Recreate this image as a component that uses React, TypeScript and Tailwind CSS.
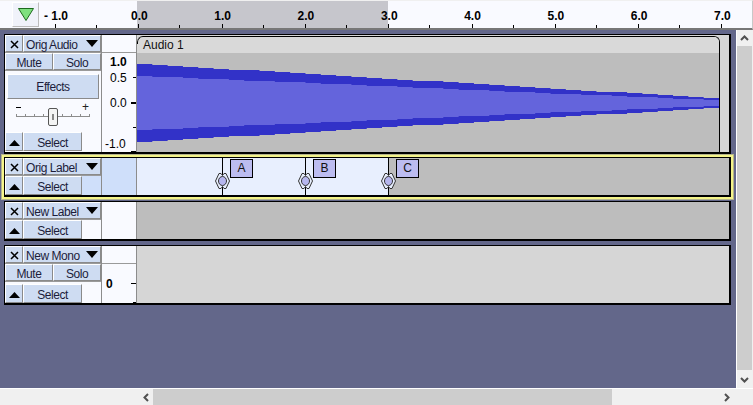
import React from 'react';

const FONT = 'font-["Liberation_Sans",Arial,sans-serif]';
const labels = ['- 1.0', '0.0', '1.0', '2.0', '3.0', '4.0', '5.0', '6.0', '7.0'];

const Btn = ({ className, children }: { className: string; children?: React.ReactNode }) => (
  <div
    className={`flex items-center justify-center bg-[#cedcf2] border-t border-l border-t-white border-l-white border-r border-b border-r-[#8a8a8a] border-b-[#8a8a8a] pt-[2px] text-[12px] tracking-[-0.45px] leading-none text-[#1c1c3a] ${className}`}
  >
    {children}
  </div>
);

const Down = () => (
  <svg width="12" height="7" viewBox="0 0 12 7" className="-mt-[2px]"><path d="M0 0h12L6 7z" fill="#000" /></svg>
);

const Up = () => (
  <svg width="11" height="6" viewBox="0 0 11 6"><path d="M0 6h11L5.5 0z" fill="#000" /></svg>
);

const TitleRow = ({ name }: { name: string }) => (
  <div className="flex h-[18px] border-b border-[#9a9a9a]">
    <Btn className="w-[18px] shrink-0">
      <svg width="9" height="9" viewBox="0 0 9 9" className="-mt-[1px]"><path d="M1 1l7 7M8 1l-7 7" stroke="#000" strokeWidth="1.5" /></svg>
    </Btn>
    <Btn className="flex-1 !justify-between pl-[2px] pr-[2px]">
      <span>{name}</span>
      <Down />
    </Btn>
  </div>
);

const MuteRow = () => (
  <div className="flex h-[18px] border-b border-[#9a9a9a]">
    <Btn className="w-[48px]">Mute</Btn>
    <Btn className="flex-1">Solo</Btn>
  </div>
);

const SelectRow = ({ active }: { active?: boolean }) => (
  <div className={`flex h-[19px] ${active ? 'bg-[#cfdffa]' : ''}`}>
    <Btn className="w-[18px]"><Up /></Btn>
    <Btn className="w-[59px]">Select</Btn>
  </div>
);

const Slider = () => (
  <div className="relative h-[30px] mx-[11px] leading-none text-[#222]">
    <span className="absolute left-0 top-[8px] h-px w-[5px] bg-black" />
    <span className="absolute right-[1px] top-[2px] text-[12px]">+</span>
    <div className="absolute left-0 right-0 top-[15px] h-[3px] border-b border-[#8c8c8c] flex justify-between">
      {[0, 1, 2, 3, 4, 5, 6, 7, 8].map((i) => (
        <span key={i} className="w-px h-[3px] bg-[#8c8c8c]" />
      ))}
    </div>
    <div className="absolute left-[32px] top-[9px] w-[10px] h-[18px] rounded-[2px] border border-[#555] bg-[#f4f4f4] flex items-center justify-center">
      <span className="w-[2px] h-[6px] bg-[#888]" />
    </div>
  </div>
);

// stepped envelope around the centre line, a0 at the left down to a1 at the right
const envelope = (a0: number, a1: number, n: number) => {
  const w = 582 / n;
  const top: string[] = [];
  const bottom: string[] = [];
  for (let i = 0; i < n; i++) {
    const a = Math.round(a0 - ((a0 - a1) * i) / (n - 1));
    top.push(`${i * w},${50 - a}`, `${(i + 1) * w},${50 - a}`);
    bottom.unshift(`${(i + 1) * w},${50 + a}`, `${i * w},${50 + a}`);
  }
  return [...top, ...bottom].join(' ');
};

const AudioTrack = () => (
  <div className="flex h-[120px] border-b-2 border-black border-t border-l border-r-2 bg-[#d6d6d6]">
    <div className="w-[96px] shrink-0 bg-[#f9faff] flex flex-col">
      <TitleRow name="Orig Audio" />
      <MuteRow />
      <div className="px-[2px] pt-[3px]">
        <Btn className="h-[25px] w-full !pt-0">Effects</Btn>
      </div>
      <Slider />
      <div className="mt-auto mb-px"><SelectRow /></div>
    </div>
    <div className="relative w-[36px] shrink-0 bg-[#f9faff] border-x border-[#8c8c8c] text-[12px] leading-none text-black">
      <div className="absolute inset-x-0 top-[17px] h-px bg-[#9a9a9a]" />
      <span className="absolute left-[8px] top-[21px] font-bold">1.0</span>
      <span className="absolute left-[8px] top-[37px]">0.5</span>
      <span className="absolute left-[8px] top-[62px]">0.0</span>
      <span className="absolute left-[3px] top-[103px]">-1.0</span>
      <span className="absolute right-0 top-[42px] w-[3px] h-px bg-black" />
      <span className="absolute right-0 top-[67px] w-[5px] h-[2px] bg-black" />
      <span className="absolute right-0 top-[92px] w-[3px] h-px bg-black" />
      <span className="absolute right-0 top-[116px] w-[5px] h-px bg-black" />
    </div>
    <div className="flex-1 flex pt-[1px]">
      <div className="relative w-[583px] shrink-0 flex flex-col border-r border-black rounded-t-[6px] border-t border-t-black overflow-hidden">
        <span className="absolute left-0 -top-px w-[8px] h-[8px] border-l border-t border-black rounded-tl-[6px]" />
        <div className="h-[16px] bg-[#d9d9d9] pl-[6px] text-[12px] leading-[16px] text-[#111]">Audio 1</div>
        <div className="flex-1 bg-[#bdbdbd]">
          <svg width="582" height="100" viewBox="0 0 582 100" className="block">
            <polygon points={envelope(39, 5, 38)} fill="#3232c8" />
            <polygon points={envelope(27, 3, 38)} fill="#6464dc" />
          </svg>
        </div>
      </div>
    </div>
  </div>
);

const Clip = ({ x, name }: { x: number; name: string }) => (
  <>
    <div className="absolute top-0 bottom-0 w-px bg-black" style={{ left: x }} />
    <div className="absolute top-[15px]" style={{ left: x - 7 }}>
      <svg width="15" height="16" viewBox="0 0 15 16" className="block">
        <path d="M4 .5h2l1.5 2 1.5-2h2l3.5 7.5-3.5 7.5h-2l-1.5-2-1.5 2h-2L.5 8z" fill="#e8effe" stroke="#333" />
        <ellipse cx="7.5" cy="8" rx="4" ry="4.5" fill="#b6b6ee" stroke="#333" />
      </svg>
    </div>
    <div
      className="absolute top-[1px] h-[19px] w-[23px] bg-[#bcbcf0] border border-black text-[12px] leading-[17px] text-center text-[#111]"
      style={{ left: x + 8 }}
    >
      {name}
    </div>
  </>
);

const LabelTrackSelected = () => (
  <div className="-mx-[3px] border border-[#b4b48c]">
    <div className="border-2 border-[#f4f48a]">
      <div className="flex h-[40px] border-t border-b-2 border-black border-l border-r-2 bg-[#bdbdbd]">
        <div className="w-[96px] shrink-0 bg-[#cfdffa] flex flex-col">
          <TitleRow name="Orig Label" />
          <SelectRow active />
        </div>
        <div className="w-[36px] shrink-0 bg-[#cfdffa] border-x border-[#8c8c8c]" />
        <div className="relative flex-1">
          <div className="absolute inset-y-0 left-0 w-[251px] bg-[#e8effe]" />
          <Clip x={85} name="A" />
          <Clip x={168} name="B" />
          <Clip x={251} name="C" />
        </div>
      </div>
    </div>
  </div>
);

const LabelTrack = () => (
  <div className="flex h-[40px] mt-[1px] border-t border-b-2 border-black border-l border-r-2 bg-[#bdbdbd]">
    <div className="w-[96px] shrink-0 bg-[#f9faff] flex flex-col">
      <TitleRow name="New Label" />
      <SelectRow />
    </div>
    <div className="w-[36px] shrink-0 bg-[#f9faff] border-x border-[#8c8c8c]" />
    <div className="flex-1" />
  </div>
);

const MonoTrack = () => (
  <div className="flex h-[60px] mt-[4px] border-t border-b-2 border-black border-l border-r-2 bg-[#d6d6d6]">
    <div className="w-[96px] shrink-0 bg-[#f9faff] flex flex-col">
      <TitleRow name="New Mono" />
      <MuteRow />
      <div className="mt-auto"><SelectRow /></div>
    </div>
    <div className="relative w-[36px] shrink-0 bg-[#f9faff] border-x border-[#8c8c8c] text-[12px] leading-none">
      <div className="absolute inset-x-0 top-[17px] h-px bg-[#9a9a9a]" />
      <span className="absolute left-[4px] top-[32px] font-bold">0</span>
      <span className="absolute right-0 top-[37px] w-[5px] h-px bg-black" />
      <span className="absolute right-0 bottom-0 w-[3px] h-px bg-black" />
    </div>
    <div className="flex-1" />
  </div>
);

const Ruler = () => (
  <div className="relative h-[30px] shrink-0 bg-[#f9faff] border-b-2 border-[#777] border-t border-t-[#f0f0f0] border-r border-r-[#c8c8c8] text-[12px] leading-none text-black">
    <div className="absolute left-[137px] w-[251px] inset-y-0 bg-[#c6c6cc]" />
    <div className="absolute left-[12px] top-[1px] w-[27px] h-[25px] border-t border-l border-white border-r border-b border-r-[#bcbcbc] border-b-[#bcbcbc] bg-[#f0f2fa] flex items-center justify-center">
      <svg width="16" height="13" viewBox="0 0 16 13">
        <path d="M.5.5h15L8 12.5z" fill="#7fe07f" stroke="#1d6b1d" />
      </svg>
    </div>
    {labels.map((t, i) => (
      <React.Fragment key={t}>
        <span className="absolute top-[9px] font-bold" style={{ left: i === 0 ? 44 : 131 + (i - 1) * 83.3 }}>
          {t}
        </span>
        <span className="absolute bottom-0 w-px h-[4px] bg-black" style={{ left: 55 + i * 83.3 }} />
        {i < 8 && <span className="absolute bottom-0 w-px h-[3px] bg-black" style={{ left: 96 + i * 83.3 }} />}
      </React.Fragment>
    ))}
  </div>
);

const Chevron = ({ d }: { d: string }) => (
  <svg width="9" height="9" viewBox="0 0 9 9"><path d={d} fill="none" stroke="#505050" strokeWidth="2" /></svg>
);

export default function App() {
  return (
    <div className={`w-[753px] h-[405px] overflow-hidden flex flex-col bg-[#f0f0f0] ${FONT}`}>
      <Ruler />
      <div className="flex flex-1 min-h-0">
        <div className="flex-1 min-w-0 bg-[#63678a] border-r border-white">
          <div className="pl-[4px] pr-[5px] pt-[4px]">
            <AudioTrack />
            <LabelTrackSelected />
            <LabelTrack />
            <MonoTrack />
          </div>
        </div>
        <div className="w-[16px] shrink-0 flex flex-col pr-px">
          <div className="h-[16px] flex items-center justify-center"><Chevron d="M1 6l3.5-3.5L8 6" /></div>
          <div className="flex-1 bg-[#cdcdcd]" />
          <div className="h-[18px] flex items-center justify-center"><Chevron d="M1 3l3.5 3.5L8 3" /></div>
        </div>
      </div>
      <div className="h-[17px] shrink-0 flex items-center border-t border-white">
        <div className="w-[140px]" />
        <div className="w-[12px] flex justify-center"><Chevron d="M6 1L2.5 4.5 6 8" /></div>
        <div className="w-[459px] h-full bg-[#cdcdcd] ml-[1px] mb-px" />
        <div className="flex-1 flex justify-end pr-[22px]"><Chevron d="M3 1l3.5 3.5L3 8" /></div>
      </div>
    </div>
  );
}
